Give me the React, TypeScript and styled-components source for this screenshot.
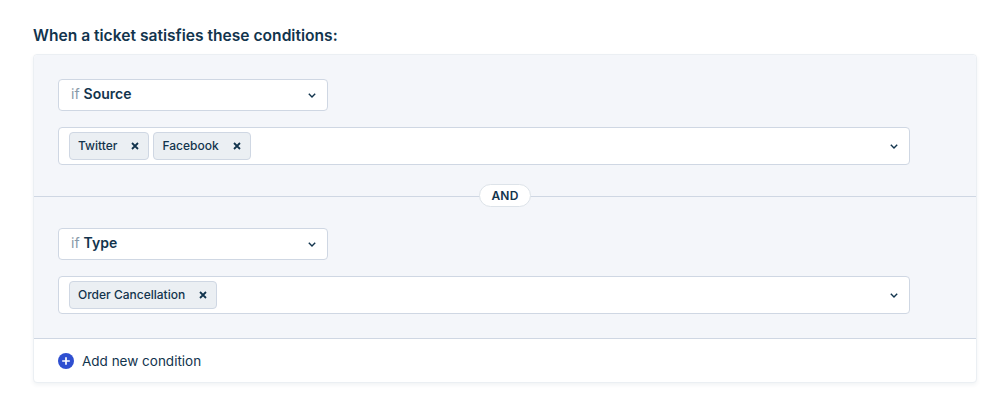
import React from "react";
import styled, { createGlobalStyle } from "styled-components";

const Global = createGlobalStyle`
  html, body { margin: 0; padding: 0; background: #fff; }
  body { font-family: Inter, "Liberation Sans", sans-serif; color: #12344d; -webkit-font-smoothing: antialiased; }
`;

const Page = styled.div`
  width: 1008px;
  height: 419px;
  box-sizing: border-box;
  padding: 26px 31px 0 33px;
`;

const Title = styled.h2`
  margin: 0 0 9px;
  font-size: 15.6px;
  line-height: 19px;
  font-weight: 600;
  color: #12344d;
`;

const Card = styled.div`
  border: 1px solid #ebeff3;
  border-radius: 4px;
  background: #fff;
  box-shadow: 0 2px 4px rgba(18, 52, 77, 0.06);
`;

const ConditionGroup = styled.div`
  background: #f4f6fa;
  border-radius: 4px 4px 0 0;
  border-bottom: 1px solid #cfd7e3;
`;

const Condition = styled.div<{ $top: number; $bottom: number }>`
  display: flex;
  flex-direction: column;
  gap: 16px;
  padding: ${(p) => p.$top}px 66px ${(p) => p.$bottom}px 24px;
`;

const Field = styled.div<{ $width?: number; $height: number }>`
  display: flex;
  align-items: center;
  box-sizing: border-box;
  width: ${(p) => (p.$width ? `${p.$width}px` : "100%")};
  height: ${(p) => p.$height}px;
  background: #fff;
  border: 1px solid #cfd7e3;
  border-radius: 4px;
`;

const SelectValue = styled.div`
  flex: 1;
  padding: 0 0 4px 12px;
  font-size: 14px;
  color: #12344d;
  font-weight: 600;
`;

const IfWord = styled.span`
  font-weight: 400;
  color: #8899a8;
  margin-right: 4px;
`;

const Tags = styled.div`
  flex: 1;
  display: flex;
  gap: 4px;
  padding-left: 10px;
`;

const Tag = styled.div`
  display: flex;
  align-items: center;
  box-sizing: border-box;
  height: 28px;
  padding: 0 9px 0 8px;
  background: #ebeff3;
  border: 1px solid #cfd7e3;
  border-radius: 4px;
  font-size: 12px;
  font-weight: 500;
  color: #12344d;
`;

const TagLabel = styled.span`
  margin-bottom: 2px;
`;

const TagClose = styled.svg`
  width: 8px;
  height: 8px;
  margin-left: 14px;
`;

const Chevron = styled.svg`
  width: 8px;
  height: 5px;
  margin-right: 11px;
  flex: none;
`;

const Separator = styled.div`
  display: flex;
  align-items: center;
  justify-content: center;
  height: 0;
  border-top: 1px solid #cfd7e3;
`;

const AndPill = styled.div`
  display: flex;
  align-items: center;
  justify-content: center;
  box-sizing: border-box;
  width: 52px;
  height: 23px;
  margin-bottom: 3px;
  background: #fff;
  border: 1px solid #dde3e9;
  border-radius: 12px;
  font-size: 12px;
  font-weight: 600;
  letter-spacing: 0.2px;
  color: #12344d;
`;

const Footer = styled.div`
  display: flex;
  align-items: center;
  gap: 8px;
  height: 43px;
  padding-left: 24px;
  font-size: 13.5px;
  color: #12344d;
`;

const PlusIcon = styled.svg`
  width: 16px;
  height: 16px;
`;

const Down = () => (
  <Chevron viewBox="0 0 8 5">
    <path d="M0.8 0.8 L4 4 L7.2 0.8" fill="none" stroke="#12344d" strokeWidth="1.4" />
  </Chevron>
);

const Close = () => (
  <TagClose viewBox="0 0 8 8">
    <path d="M1 1 L7 7 M7 1 L1 7" fill="none" stroke="#12344d" strokeWidth="1.8" />
  </TagClose>
);

const conditions = [
  { field: "Source", tags: ["Twitter", "Facebook"], top: 24, bottom: 31 },
  { field: "Type", tags: ["Order Cancellation"], top: 31, bottom: 24 },
];

export default function App() {
  return (
    <Page>
      <Global />
      <Title>When a ticket satisfies these conditions:</Title>
      <Card>
        <ConditionGroup>
          {conditions.map((c, i) => (
            <React.Fragment key={c.field}>
              {i > 0 && (
                <Separator>
                  <AndPill>AND</AndPill>
                </Separator>
              )}
              <Condition $top={c.top} $bottom={c.bottom}>
                <Field $width={270} $height={32}>
                  <SelectValue>
                    <IfWord>if</IfWord>
                    {c.field}
                  </SelectValue>
                  <Down />
                </Field>
                <Field $height={38}>
                  <Tags>
                    {c.tags.map((t) => (
                      <Tag key={t}>
                        <TagLabel>{t}</TagLabel>
                        <Close />
                      </Tag>
                    ))}
                  </Tags>
                  <Down />
                </Field>
              </Condition>
            </React.Fragment>
          ))}
        </ConditionGroup>
        <Footer>
          <PlusIcon viewBox="0 0 16 16">
            <circle cx="8" cy="8" r="8" fill="#2f4fd0" />
            <path d="M8 4.2 V11.8 M4.2 8 H11.8" stroke="#fff" strokeWidth="1.7" />
          </PlusIcon>
          Add new condition
        </Footer>
      </Card>
    </Page>
  );
}
